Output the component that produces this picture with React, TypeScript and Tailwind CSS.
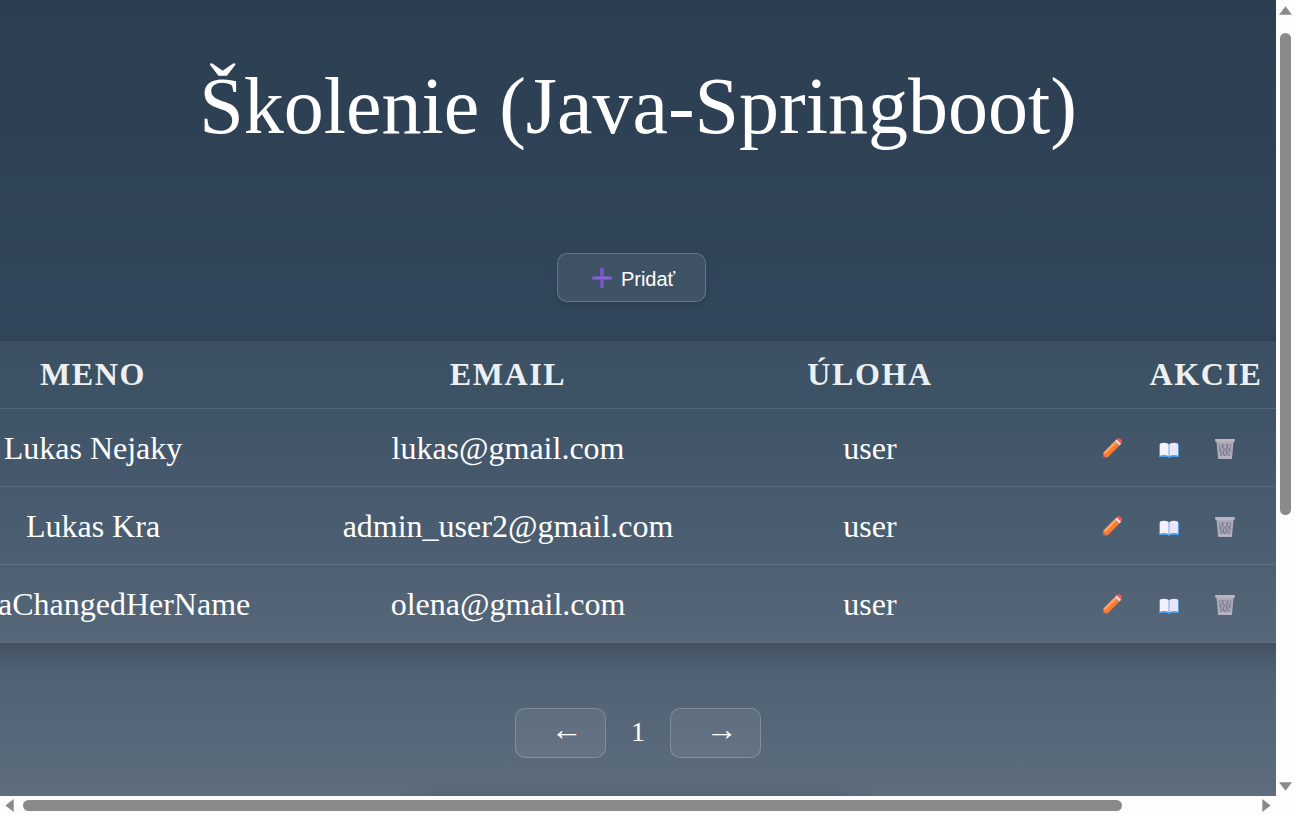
import React from 'react';

const users = [
  { name: 'Lukas Nejaky', email: 'lukas@gmail.com', role: 'user' },
  { name: 'Lukas Kra', email: 'admin_user2@gmail.com', role: 'user' },
  { name: 'OlenaChangedHerName', email: 'olena@gmail.com', role: 'user' },
];

const PencilIcon = () => (
  <svg width="22" height="22" viewBox="0 0 22 22">
    <path d="M2.5 15.5 L14 4 L18.5 8.5 L7 20 L1.5 21 Z" fill="#ff7a2e" />
    <path d="M2.5 15.5 L14 4 L15.8 5.8 L4.3 17.3 Z" fill="#ffa25a" />
    <path d="M14 4 L15.7 2.3 L20.2 6.8 L18.5 8.5 Z" fill="#eadfe8" />
    <path d="M15.7 2.3 L16.6 1.4 Q17.8 0.6 19 1.4 L20.8 3.2 Q21.5 4.4 20.8 5.6 L20.2 6.8 Z" fill="#f9554a" />
    <path d="M2 17.8 L4.7 20.5 L1.5 21 Z" fill="#7d5a70" />
  </svg>
);

const BookIcon = () => (
  <svg width="22" height="22" viewBox="0 0 22 22">
    <path d="M1 7.5 H21 V20 H12 V21 H10 V20 H1 Z" fill="#4f9fe0" />
    <path d="M2 6.5 Q7 5 10.6 7 V19 Q7 17.5 2 18.5 Z" fill="#f5f1fc" />
    <path d="M20 6.5 Q15 5 11.4 7 V19 Q15 17.5 20 18.5 Z" fill="#ebe5f7" />
  </svg>
);

const TrashIcon = () => (
  <svg width="22" height="22" viewBox="0 0 22 22">
    <path d="M1 2 H21 L20.5 5 H1.5 Z" fill="#b9b5c1" />
    <path d="M2.5 5 H19.5 L18 21 Q17.9 22 16.5 22 H5.5 Q4.1 22 4 21 Z" fill="#aeaab8" />
    <path d="M5 7 L7.5 19 M8.5 7 L10 19 M13.5 7 L12 19 M17 7 L14.5 19 M5.2 14 L10 7 M6.5 19 L15 7 M10 19 L16.8 10 M7 7 L15.5 19 M11 7 L17 14.5 M5.5 12 L11 19" stroke="#73768a" strokeWidth="0.7" fill="none" />
    <path d="M4 19.5 H18 V21.5 H4 Z" fill="#b9b5c1" />
  </svg>
);

const Card = ({ children, className }: { children: React.ReactNode; className: string }) => (
  <button className={`shrink-0 rounded-[10px] border border-white/20 bg-white/[0.07] ${className}`}>
    {children}
  </button>
);

export default function App() {
  return (
    <div className="h-[815px] w-[1295px] overflow-hidden bg-[#fdfdfd] font-['Liberation_Serif',serif] text-white">
      <div className="flex h-[796px]">
        <main className="flex h-[796px] w-[1276px] shrink-0 flex-col items-center overflow-hidden bg-gradient-to-b from-[#2c3e50] via-[#34495e] to-[#5d6d7e]">
          <h1 className="mt-[52px] h-[108px] shrink-0 whitespace-nowrap text-[80px] leading-[108px] font-normal">
            Školenie (Java-Springboot)
          </h1>
          <Card className="mt-[93px] mr-[13px] flex h-[49px] w-[149px] items-center justify-center gap-[9px] pl-[4px] font-['Liberation_Sans',sans-serif] text-[20px] shadow-[0_2px_8px_rgba(0,0,0,0.12)]">
            <svg width="20" height="20" viewBox="0 0 20 20">
              <path d="M10 1.5 V18.5 M1.5 10 H18.5" stroke="#7a58cc" strokeWidth="3.6" strokeLinecap="round" fill="none" />
              <path d="M3 10 H17" stroke="#9478e0" strokeWidth="1" fill="none" />
            </svg>
            <span className="pt-[2px]">Pridať</span>
          </Card>
          <table className="mt-[39px] -ml-[79px] w-[1592px] shrink-0 table-fixed border-collapse self-start text-center text-[32px] shadow-[0_8px_24px_rgba(0,0,0,0.2)]">
            <colgroup>
              <col className="w-[344px]" />
              <col className="w-[486px]" />
              <col className="w-[238px]" />
              <col className="w-[524px]" />
            </colgroup>
            <thead>
              <tr className="h-[67px] border-b border-white/10 bg-white/5">
                <th className="font-bold tracking-[1.6px] text-[#ecf0f1]">MENO</th>
                <th className="font-bold tracking-[1.6px] text-[#ecf0f1]">EMAIL</th>
                <th className="font-bold tracking-[1.6px] text-[#ecf0f1]">ÚLOHA</th>
                <th className="pr-[90px] font-bold tracking-[1.6px] text-[#ecf0f1]">AKCIE</th>
              </tr>
            </thead>
            <tbody>
              {users.map((u) => (
                <tr key={u.email} className="h-[78px] border-b border-white/10 bg-white/5">
                  <td className="pt-[2px] whitespace-nowrap">{u.name}</td>
                  <td className="pt-[2px]">{u.email}</td>
                  <td className="pt-[2px]">{u.role}</td>
                  <td>
                    <div className="mt-[1px] ml-[112px] flex gap-[34.5px]">
                      <PencilIcon />
                      <BookIcon />
                      <TrashIcon />
                    </div>
                  </td>
                </tr>
              ))}
            </tbody>
          </table>
          <div className="mt-[65px] flex shrink-0 items-center text-[32px] leading-none">
            <Card className="h-[50px] w-[91px] pb-[8px] pl-[12px]">←</Card>
            <span className="w-[64px] pb-[2px] text-center text-[28px]">1</span>
            <Card className="h-[50px] w-[91px] pb-[8px] pl-[12px]">→</Card>
          </div>
          <div className="mt-[46px] h-[40px] w-[430px] shrink-0 shadow-[0_0_24px_rgba(0,0,0,0.25)]" />
        </main>
        {/* vertical scrollbar */}
        <div className="flex w-[19px] flex-col items-center pt-[6px] pb-[5px]">
          <svg width="13" height="10" viewBox="0 0 14 10"><path d="M7 0 L14 9 H0 Z" fill="#8a8a8a" /></svg>
          <div className="mt-[17px] h-[482px] w-[11px] rounded-full bg-[#8a8a8a]" />
          <div className="flex-1" />
          <svg width="13" height="10" viewBox="0 0 14 10"><path d="M0 1 H14 L7 10 Z" fill="#8a8a8a" /></svg>
        </div>
      </div>
      {/* horizontal scrollbar */}
      <div className="flex h-[19px] w-[1276px] items-center px-[5px]">
        <svg width="10" height="13" viewBox="0 0 10 14"><path d="M0 7 L9 0 V14 Z" fill="#8a8a8a" /></svg>
        <div className="ml-[8px] h-[11px] w-[1099px] rounded-full bg-[#8a8a8a]" />
        <div className="flex-1" />
        <svg width="10" height="13" viewBox="0 0 10 14"><path d="M10 7 L1 0 V14 Z" fill="#8a8a8a" /></svg>
      </div>
    </div>
  );
}
